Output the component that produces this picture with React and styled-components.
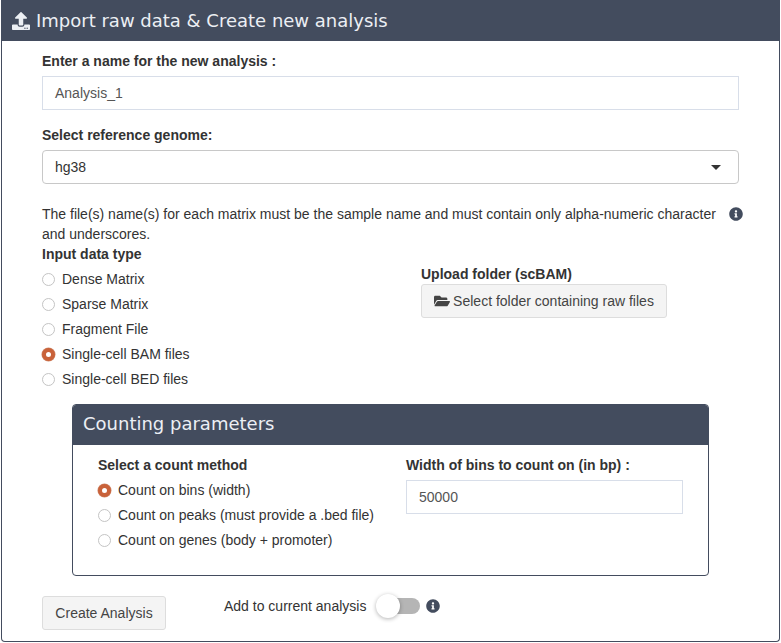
import React from 'react';
import styled, { createGlobalStyle } from 'styled-components';
import { FaUpload, FaFolderOpen, FaInfoCircle } from 'react-icons/fa';

const Global = createGlobalStyle`
    html, body {
        margin: 0;
        padding: 0;
        background: #fff;
        font-family: "Liberation Sans", Arial, sans-serif;
        font-size: 14px;
        line-height: 20px;
        color: #333;
    }
    * {
        box-sizing: border-box;
    }
`;

const Panel = styled.div`
    width: 779px;
    height: 642px;
    margin-left: 1px;
    border: 1px solid #434c5e;
    border-top: 0;
    border-radius: 0 0 4px 4px;
`;

const PanelHeader = styled.div`
    display: flex;
    align-items: center;
    height: 41px;
    margin: 0 -1px;
    padding-left: 11px;
    background: #434c5e;
    color: #eceff4;
    font-family: "DejaVu Sans", Verdana, sans-serif;
    font-size: 18px;
    svg {
        width: 18px;
        height: 18px;
        margin-right: 6px;
    }
`;

const Body = styled.div`
    padding: 10px 40px 0 40px;
`;

const Label = styled.div`
    font-weight: 700;
    height: 20px;
    margin-bottom: 5px;
`;

const TextInput = styled.div`
    display: flex;
    align-items: center;
    width: ${p => p.$width || '100%'};
    height: 34px;
    padding: 0 12px;
    border: 1px solid #d8dee9;
    color: #555;
    background: #fff;
`;

const Field = styled.div`
    margin-bottom: 15px;
`;

const Select = styled.div`
    display: flex;
    align-items: center;
    justify-content: space-between;
    height: 34px;
    padding: 0 17px 0 12px;
    border: 1px solid #c8c8c8;
    border-radius: 4px;
    color: #333;
`;

const Caret = styled.span`
    width: 0;
    height: 0;
    border-left: 5px solid transparent;
    border-right: 5px solid transparent;
    border-top: 5px solid #333;
`;

const Note = styled.div`
    display: flex;
    justify-content: space-between;
    align-items: flex-start;
    margin-top: 20px;
`;

const NoteText = styled.div`
    width: 680px;
`;

const InfoIcon = styled(FaInfoCircle)`
    flex: none;
    width: 14px;
    height: 14px;
    color: #434c5e;
    margin: ${p => p.$margin || '3px -4px 0 0'};
`;

const DataRow = styled.div`
    display: grid;
    grid-template-columns: 379px 246px;
`;

const UploadColumn = styled.div`
    padding-top: 20px;
`;

const UploadLabel = styled.div`
    font-weight: 700;
    height: 20px;
`;

const Button = styled.div`
    display: inline-flex;
    align-items: center;
    justify-content: center;
    height: 34px;
    width: ${p => p.$width};
    border: 1px solid #ddd;
    border-radius: 3px;
    background: #f4f4f4;
    color: #444;
    svg {
        width: 16px;
        height: 16px;
        margin-right: 3px;
    }
`;

const RadioList = styled.div`
    display: flex;
    flex-direction: column;
    padding-top: 2px;
`;

const RadioRow = styled.div`
    display: flex;
    align-items: center;
    height: 25px;
    gap: 7px;
`;

const RadioDot = styled.span`
    flex: none;
    width: 13px;
    height: 13px;
    margin-top: 2px;
    border-radius: 50%;
    border: ${p => (p.$checked ? '4px solid #c9623a' : '1px solid #c4c4c4')};
    background: #fff;
    box-shadow: ${p => (p.$checked ? '0 0 0 0.5px #d08a6c' : 'none')};
`;

const SubPanel = styled.div`
    width: 637px;
    height: 172px;
    margin: 13px 0 20px 30px;
    border: 1px solid #434c5e;
    border-radius: 4px;
    overflow: hidden;
`;

const SubHeader = styled.div`
    display: flex;
    align-items: center;
    height: 40px;
    padding: 0 0 2px 10px;
    background: #434c5e;
    color: #eceff4;
    font-family: "DejaVu Sans", Verdana, sans-serif;
    font-size: 18px;
`;

const SubBody = styled.div`
    display: grid;
    grid-template-columns: 308px 277px;
    padding: 10px 0 0 25px;
`;

const SubLabel = styled.div`
    font-weight: 700;
    height: 20px;
`;

const WidthLabel = styled(SubLabel)`
    margin-bottom: 5px;
`;

const Footer = styled.div`
    display: flex;
    align-items: flex-start;
`;

const AddRow = styled.div`
    display: flex;
    align-items: center;
    height: 20px;
    margin: 0 0 0 58px;
`;

const Switch = styled.span`
    position: relative;
    display: inline-block;
    width: 32px;
    height: 16px;
    margin: 0 6px 0 22px;
    border-radius: 0 8px 8px 0;
    background: #b5b5b5;
`;

const Knob = styled.span`
    position: absolute;
    left: -12px;
    top: -4px;
    width: 24px;
    height: 24px;
    border-radius: 50%;
    background: #fff;
    box-shadow: 0 1px 4px rgba(0, 0, 0, 0.3);
`;

const dataTypes = ['Dense Matrix', 'Sparse Matrix', 'Fragment File', 'Single-cell BAM files', 'Single-cell BED files'];
const countMethods = ['Count on bins (width)', 'Count on peaks (must provide a .bed file)', 'Count on genes (body + promoter)'];

const Radios = ({ items, checked }) => (
    <RadioList>
        {items.map(item => (
            <RadioRow key={item}>
                <RadioDot $checked={item === checked} />
                {item}
            </RadioRow>
        ))}
    </RadioList>
);

export default function App() {
    return (
        <Panel>
            <Global />
            <PanelHeader>
                <FaUpload />
                Import raw data &amp; Create new analysis
            </PanelHeader>
            <Body>
                <Field>
                    <Label>Enter a name for the new analysis :</Label>
                    <TextInput>Analysis_1</TextInput>
                </Field>
                <Field>
                    <Label>Select reference genome:</Label>
                    <Select>
                        hg38
                        <Caret />
                    </Select>
                </Field>
                <Note>
                    <NoteText>
                        The file(s) name(s) for each matrix must be the sample name and must contain only alpha-numeric character and underscores.
                    </NoteText>
                    <InfoIcon />
                </Note>
                <DataRow>
                    <div>
                        <SubLabel>Input data type</SubLabel>
                        <Radios items={dataTypes} checked="Single-cell BAM files" />
                    </div>
                    <UploadColumn>
                        <UploadLabel>Upload folder (scBAM)</UploadLabel>
                        <Button $width="246px">
                            <FaFolderOpen />
                            Select folder containing raw files
                        </Button>
                    </UploadColumn>
                </DataRow>
                <SubPanel>
                    <SubHeader>Counting parameters</SubHeader>
                    <SubBody>
                        <div>
                            <SubLabel>Select a count method</SubLabel>
                            <Radios items={countMethods} checked="Count on bins (width)" />
                        </div>
                        <div>
                            <WidthLabel>Width of bins to count on (in bp) :</WidthLabel>
                            <TextInput>50000</TextInput>
                        </div>
                    </SubBody>
                </SubPanel>
                <Footer>
                    <Button $width="124px">Create Analysis</Button>
                    <AddRow>
                        Add to current analysis
                        <Switch>
                            <Knob />
                        </Switch>
                        <InfoIcon $margin="0" />
                    </AddRow>
                </Footer>
            </Body>
        </Panel>
    );
}
